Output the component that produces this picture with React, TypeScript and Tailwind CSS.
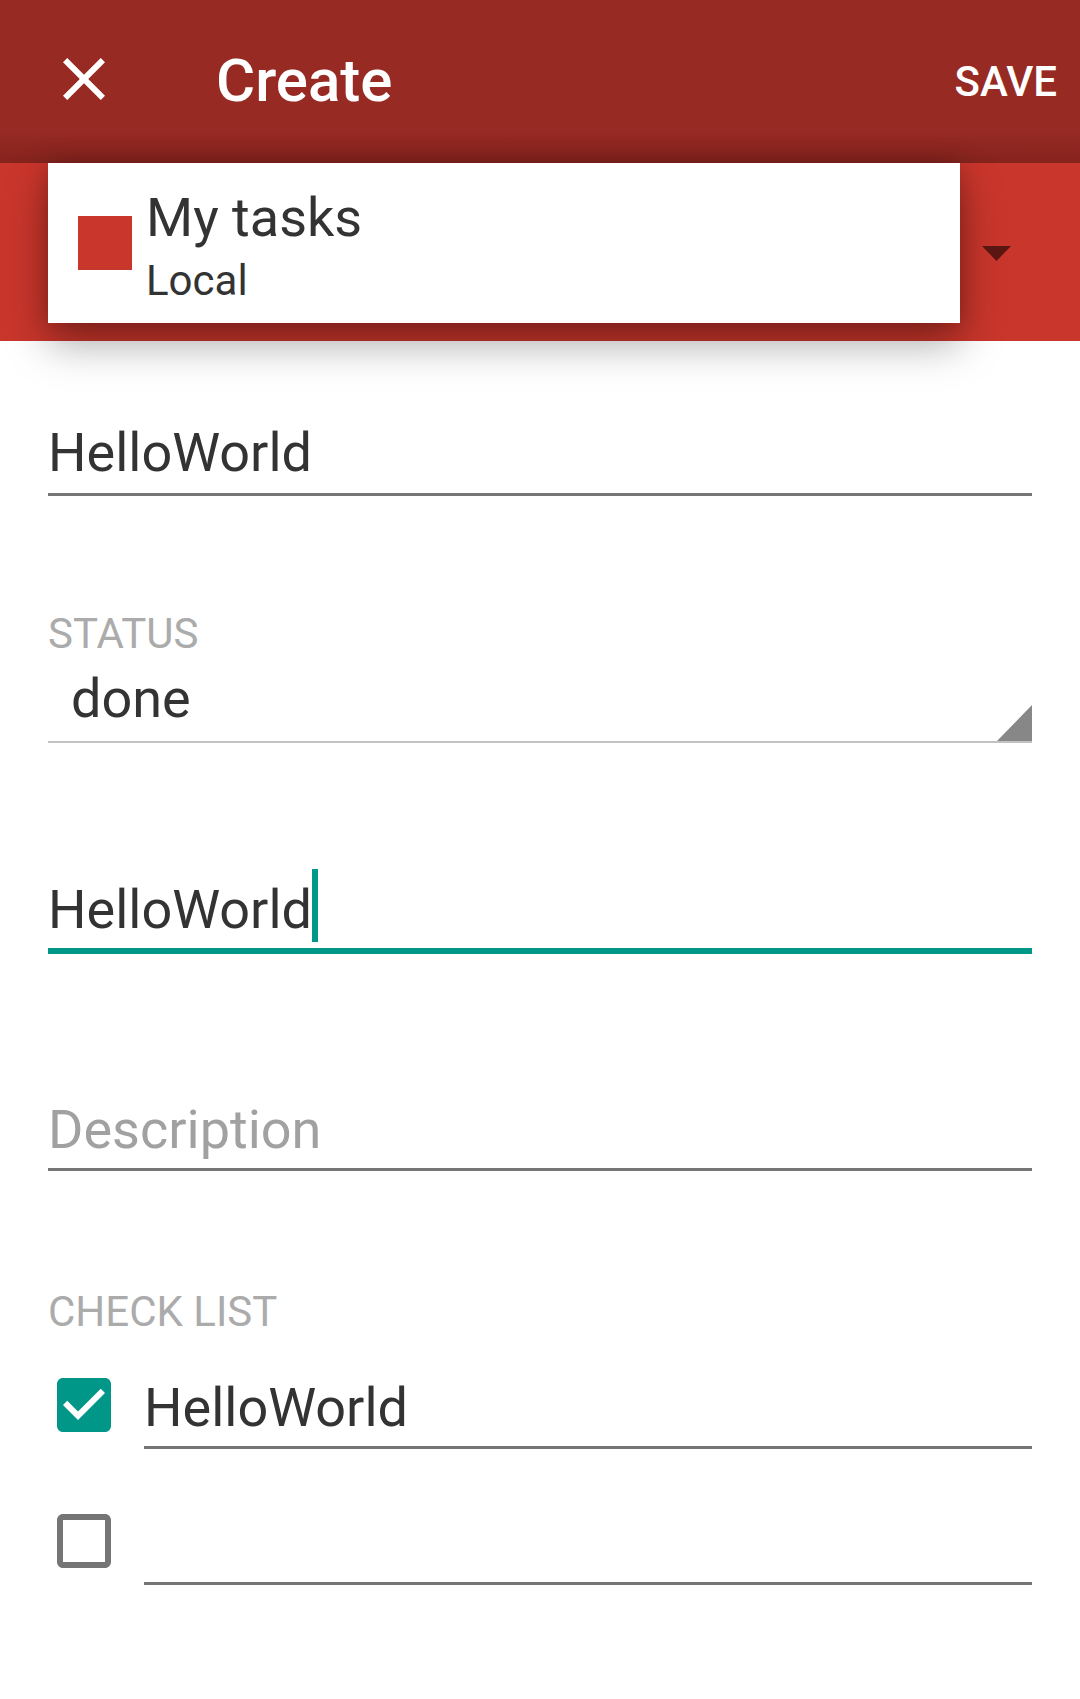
import React from 'react';

function CloseIcon() {
  return (
    <svg viewBox="0 0 24 24" className="h-[72px] w-[72px] fill-white">
      <path d="M19 6.41L17.59 5 12 10.59 6.41 5 5 6.41 10.59 12 5 17.59 6.41 19 12 13.41 17.59 19 19 17.59 13.41 12z" />
    </svg>
  );
}

function CheckBox({ checked }: { checked: boolean }) {
  if (checked) {
    return (
      <svg viewBox="0 0 24 24" className="h-[72px] w-[72px] shrink-0 fill-[#009688]">
        <path d="M19 3H5c-1.11 0-2 .9-2 2v14c0 1.1.89 2 2 2h14c1.11 0 2-.9 2-2V5c0-1.1-.89-2-2-2zm-9 14l-5-5 1.41-1.41L10 14.17l7.59-7.59L19 8l-9 9z" />
      </svg>
    );
  }
  return (
    <svg viewBox="0 0 24 24" className="h-[72px] w-[72px] shrink-0 fill-[#757575]">
      <path d="M19 5v14H5V5h14m0-2H5c-1.1 0-2 .9-2 2v14c0 1.1.9 2 2 2h14c1.1 0 2-.9 2-2V5c0-1.1-.9-2-2-2z" />
    </svg>
  );
}

function CheckRow({ checked, text, className }: { checked: boolean; text: string; className: string }) {
  return (
    <div className={`flex items-start ${className}`}>
      <CheckBox checked={checked} />
      <div className="ml-[24px] flex-1">
        <div className="mt-[12px] h-[54px] text-[54px] leading-[54px] text-[#333333]">{text}</div>
        <div className="mt-[11px] h-[3px] bg-[#757575]" />
      </div>
    </div>
  );
}

export default function App() {
  return (
    <div className="min-h-[1699px] w-full bg-white font-['Roboto',sans-serif]">
      {/* toolbar */}
      <header className="flex h-[163px] items-start bg-[linear-gradient(to_bottom,#982a24_0%,#982a24_80%,#85231d_100%)] pl-[48px] pr-[23px] text-white">
        <div className="mt-[43px]">
          <CloseIcon />
        </div>
        <div className="ml-[96px] mt-[51px] text-[60px] font-medium leading-[60px]">Create</div>
        <div className="ml-auto mt-[61px] text-[42px] font-medium leading-[42px]">SAVE</div>
      </header>

      {/* list spinner */}
      <div className="flex h-[178px] items-start bg-[#c9362c] pl-[48px]">
        <div className="relative z-10 flex h-[160px] w-[912px] items-start bg-white shadow-[0_20px_40px_rgba(0,0,0,0.34),0_0_20px_rgba(0,0,0,0.18)]">
          <div className="ml-[30px] mt-[53px] h-[54px] w-[54px] bg-[#c9362c]" />
          <div className="ml-[14px] pt-[28px] text-[#333333]">
            <div className="text-[54px] leading-[54px]">My tasks</div>
            <div className="mt-[15px] text-[42px] leading-[42px]">Local</div>
          </div>
        </div>
        <svg viewBox="0 0 29 15" className="ml-[22px] mt-[83px] h-[15px] w-[29px] fill-[#5c1713]">
          <polygon points="0,0 29,0 14.5,15" />
        </svg>
      </div>

      {/* form */}
      <div className="flex flex-col px-[48px]">
        <div className="mt-[85px] h-[54px] text-[54px] leading-[54px] text-[#333333]">HelloWorld</div>
        <div className="mt-[13px] h-[3px] bg-[#757575]" />

        <div className="mt-[117px] h-[42px] text-[42px] leading-[42px] text-[#ababab]">STATUS</div>
        <div className="mt-[17px] flex h-[69px] items-end">
          <div className="flex-1 self-start pl-[23px] text-[54px] leading-[54px] text-[#333333]">done</div>
          <svg viewBox="0 0 35 36" className="h-[36px] w-[35px] fill-[#878787]">
            <polygon points="35,0 35,36 0,36" />
          </svg>
        </div>
        <div className="h-[2px] bg-[#c2c2c2]" />

        <div className="mt-[140px] flex h-[54px] items-start">
          <div className="text-[54px] leading-[54px] text-[#333333]">HelloWorld</div>
          <div className="-mt-[14px] h-[73px] w-[6px] bg-[#009688]" />
        </div>
        <div className="mt-[11px] h-[6px] bg-[#009688]" />

        <div className="mt-[149px] h-[54px] text-[54px] leading-[54px] text-[#a1a1a1]">Description</div>
        <div className="mt-[11px] h-[3px] bg-[#757575]" />

        <div className="mt-[120px] h-[42px] text-[42px] leading-[42px] text-[#ababab]">CHECK LIST</div>

        <CheckRow checked text="HelloWorld" className="mt-[36px]" />
        <CheckRow checked={false} text="" className="mt-[56px]" />
      </div>
    </div>
  );
}
